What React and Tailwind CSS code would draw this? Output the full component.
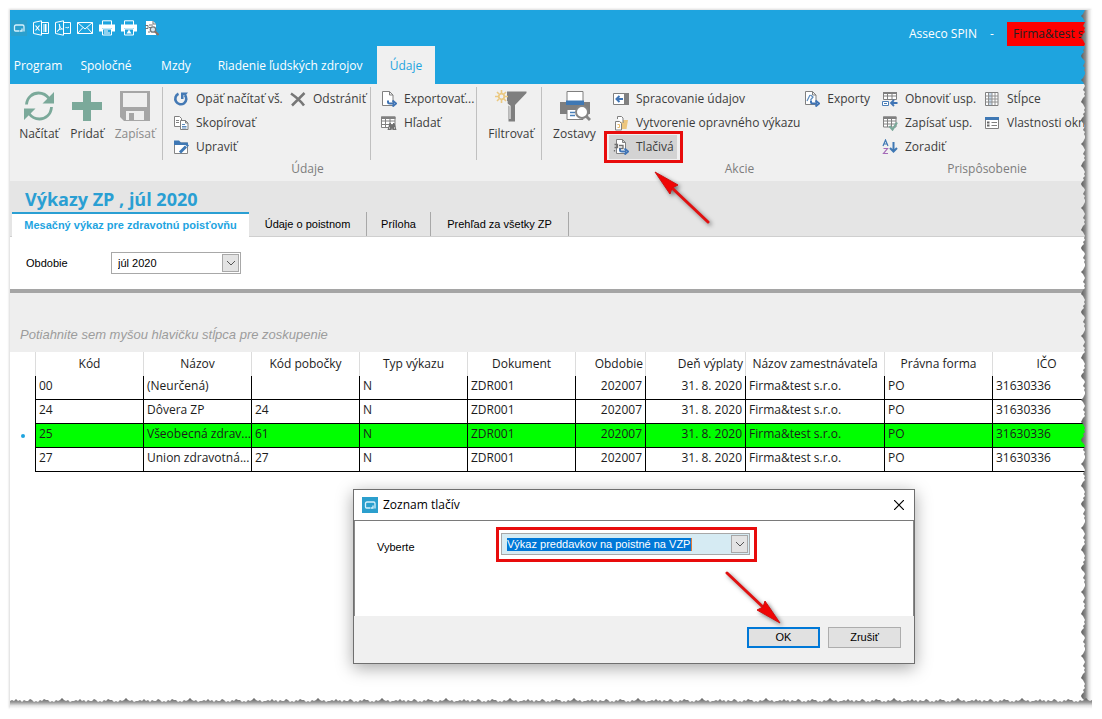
import React, { useState } from "react";
import clsx from "clsx";

const Svg = ({ className = "size-4", box = "0 0 16 16", children }) => (
  <svg viewBox={box} className={clsx("shrink-0", className)} fill="none" aria-hidden="true">
    {children}
  </svg>
);

/* ---------- Quick access icons ---------- */

const LogoIcon = ({ className }) => (
  <Svg className={className}>
    <rect width="16" height="16" fill="#2b9fcd" />
    <path d="M8.5 11h-4Q3.5 11 3.5 10V6.500Q3.500 5 5 5h6.500Q13 5 13 6.500V11.500M9 11H11V8.500" stroke="#d8f1fb" strokeWidth="1.3" />
  </Svg>
);

const ExcelIcon = () => (
  <Svg>
    <path d="M.5 2.500 8.500.8v14.400L.5 13.500zM8.500 2.500h7v11h-7M10 5h4M10 7h4M10 9h4M10 11h4M12.500 4v8" stroke="#fff" />
    <path d="m2.500 5.500 4 5m0-5-4 5" stroke="#fff" strokeWidth="1.200" />
  </Svg>
);

const PdfIcon = () => (
  <Svg>
    <path d="M.5 2.500 8.500.8v14.400L.5 13.500zM8.500 2.500h7v11h-7" stroke="#fff" />
    <path d="M2.200 11.500C5 9.500 5 7 4.300 4.200 5 8 6 8.700 7.500 9 5.500 8.800 4 9.200 2.200 11.500M10.500 8l1-1 1 1 1.500-1" stroke="#fff" />
  </Svg>
);

const MailIcon = () => (
  <Svg>
    <path d="M.5 2.500h15v11H.5zM.5 2.500 8 9l7.500-6.500M.5 13.500l5.500-6M15.500 13.500 10 7.500" stroke="#fff" />
  </Svg>
);

const PrinterIcon = ({ preview }) => (
  <Svg>
    <path d="M3.500 5V.8h9V5" stroke="#fff" />
    <path d="M0 4.500h16v7h-3V8.500H3v3H0z" fill="#fff" />
    <path d="M3.500 9h9v6h-9z" stroke="#fff" />
    {preview ? <path d="m8 9.500 2.500 4h-5z" fill="#fff" /> : <path d="M5 11h4M5 13h6" stroke="#fff" />}
  </Svg>
);

const ReportSearchIcon = () => (
  <Svg>
    <path d="M3 1h7l3 3v11H3z" fill="#fff" />
    <path d="M10 1v3h3M2 5.500h3v3H2M6 5h4M6 7.500h2M5 12h2" stroke="#6f777b" />
    <circle cx="10" cy="9.500" r="2.700" fill="#d6e7f1" stroke="#6f777b" strokeWidth="1.300" />
    <path d="m12 11.500 3.500 3.500" stroke="#8a6f63" strokeWidth="2" />
  </Svg>
);

/* ---------- Large ribbon icons ---------- */

const ReloadIcon = () => (
  <Svg className="size-8" box="0 0 32 32">
    <path d="M3.500 14.500C4 7 10 3 15.500 3c4.500 0 8 2 10.500 5.500M28.500 17C28 25 22 29 16.500 29 12 29 8.500 27 6 23.500" stroke="#7ba99a" strokeWidth="2.800" />
    <path d="M31 2v11.500H19.500zM1 30V18.500h11.500z" fill="#7ba99a" />
  </Svg>
);

const PlusIcon = () => (
  <Svg className="size-8" box="0 0 32 32">
    <path d="M12 1h8v11h11v8H20v11h-8V20H1v-8h11z" fill="#7ba99a" />
  </Svg>
);

const SaveIcon = () => (
  <Svg className="size-8" box="0 0 32 32">
    <path d="M1 1h30v30H5l-4-4z" fill="#a6a6a6" />
    <path d="M4 3h24v14H4zM7 21h18v9H7z" fill="#efefef" />
    <path d="M10 23h5v7h-5z" fill="#a6a6a6" />
  </Svg>
);

const FilterIcon = () => (
  <Svg className="size-8" box="0 0 32 32">
    <path d="M12 1.500h19.500v1.500L20 15v16.500h-6.500V15L12 13z" fill="#7f7f7f" />
    <path d="M12 11v3l3 2v13" stroke="#f0f0f0" strokeWidth="1.200" />
    <circle cx="6.500" cy="6.500" r="2.800" stroke="#ebc982" strokeWidth="1.800" />
    <path d="M6.500 0v3M6.500 10v3M0 6.500h3M10 6.500h3M2 2l2 2M9 9l2 2M2 11l2-2M9 4l2-2" stroke="#ebc982" strokeWidth="1.600" />
  </Svg>
);

const PrintPreviewIcon = () => (
  <Svg className="size-8" box="0 0 32 32">
    <path d="M1 12h30v12H1z" fill="#7f7f7f" />
    <path d="M8 1.500h16V15H8z" fill="#fff" stroke="#7f7f7f" />
    <path d="M7 10.500h18V15H7z" fill="#3f78b4" />
    <path d="M8 19.500h16v10H8z" fill="#fff" stroke="#7f7f7f" />
    <path d="M11 22.500h5M11 25.500h5" stroke="#4a7fb8" strokeWidth="1.300" />
    <circle cx="23" cy="22" r="6" fill="#fff" stroke="#858585" strokeWidth="2" />
    <path d="m27 26 4 4" stroke="#858585" strokeWidth="3" />
  </Svg>
);

/* ---------- Small ribbon icons ---------- */

const Arrow = () => <path d="M7 9.500v1.500q0 1.500 2 1.500h4M11.500 9.500l3.500 3-3.500 3" stroke="#3f74b5" strokeWidth="2" />;

const icons = {
  undo: (
    <Svg>
      <path d="M5.500 2.800A5.500 5.500 0 1 0 11.800 4" stroke="#4479b4" strokeWidth="2.600" />
      <path d="M8 1.500h7L13 4h-2.500v4H8z" fill="#4479b4" />
    </Svg>
  ),
  copy: (
    <Svg>
      <path d="M1.500 1.500h5l2 2v8h-7zM3 5.500h3M3 7.500h3" stroke="#808080" fill="#fff" />
      <path d="M7.500 5.500h5l2.500 2.500v6.500H7.500zM12.500 5.500V8H15" stroke="#808080" fill="#fff" />
      <path d="M9 9.500h3M9 11.500h4.500M9 13h4.500" stroke="#5b8abd" />
    </Svg>
  ),
  edit: (
    <Svg>
      <path d="M1.500 4v10.500h13V4z" fill="#fff" stroke="#858585" />
      <path d="M1 1.500h5l2 2h7V6H1z" fill="#3f78b4" />
      <path d="m7 13.500 6-6" stroke="#3f78b4" strokeWidth="3" />
      <path d="M13.500 7 15 5.500" stroke="#3f78b4" strokeWidth="3" />
    </Svg>
  ),
  remove: (
    <Svg>
      <path d="M1 2.500C6 6 10 9 14 14.500M14.500 2 2 14.500" stroke="#777" strokeWidth="2.500" />
    </Svg>
  ),
  exportFile: (
    <Svg>
      <path d="M1.500.5h7l3.500 3.500v10.500H1.500zM8.500.5V4H12" stroke="#808080" fill="#fff" />
      <Arrow />
    </Svg>
  ),
  find: (
    <Svg>
      <path d="M.5 2h13.500v10.500H.5zM.5 6h13.500M.5 9.500h13.500M4.500 3v9M9 3v9" stroke="#808080" fill="#fff" />
      <path d="M0 1.500h14.500v2.500H0z" fill="#808080" />
      <path d="m8.500 8-2 7h4l.5-2 .5 2h4l-2-7h-1.500v2h-2V8z" fill="#707070" />
      <path d="M8 13h1M13 13h1" stroke="#fff" />
    </Svg>
  ),
  process: (
    <Svg>
      <path d="M.5 2.500h15v11H.5z" fill="#fff" stroke="#808080" />
      <path d="M11 2h5v12h-5z" fill="#808080" />
      <path d="M10 8H4M6.500 5 3.500 8l3 3" stroke="#3f74b5" strokeWidth="2" />
    </Svg>
  ),
  correction: (
    <Svg>
      <path d="M8 5h7l-1.500 9H6z" fill="#edc67d" />
      <path d="M2.500 6.500h4l2 2v6.500h-6zM4.500 4V1.500h4l1.500 1.500v5" stroke="#808080" fill="#fff" />
      <path d="M4.500 9.500h2v3h-2" stroke="#e8bd70" />
    </Svg>
  ),
  forms: (
    <Svg>
      <path d="M3.500.5h6l3 3v11h-9zM9.500.5v3h3" stroke="#808080" fill="#fff" />
      <path d="M1.500 5.500h3v3h-3M6 6.500h4v3H6M1.500 11v1.500" stroke="#707070" strokeWidth="1.300" />
      <Arrow />
    </Svg>
  ),
  exports: (
    <Svg>
      <path d="M1.500.5h7l3.500 3.500v9.500H1.500zM8.500.5V4H12" stroke="#808080" fill="#fff" />
      <path d="M3 10 6 4M6.500 4l2.500 2-2.500 3" stroke="#5b8abd" strokeWidth="1.200" />
      <Arrow />
    </Svg>
  ),
  restoreView: (
    <Svg>
      <path d="M1.500 1.500h13v7h-13zM1.500 5h13M5.500 2v6.500M10 2v6.500" stroke="#808080" fill="#fff" />
      <path d="M1 1h14v2H1z" fill="#808080" />
      <path d="M.5 10.500h6v4h-6zM2 12.500h3" stroke="#4b7eb7" fill="#fff" />
      <path d="M15.500 12H10M12 9l-3 3 3 3" stroke="#3f74b5" strokeWidth="1.800" />
    </Svg>
  ),
  saveView: (
    <Svg>
      <path d="M1.500 2h12.500v10H1.500zM1.500 6h12.500M1.500 9h12.500M5.500 3v9M9.500 3v9" stroke="#808080" fill="#fff" />
      <path d="M1 1.500h13.500V4H1z" fill="#808080" />
      <path d="m7.500 11 3 3.500L15 7.500" stroke="#7ba99a" strokeWidth="2.200" />
    </Svg>
  ),
  sort: (
    <Svg>
      <path d="M1 7 3.500 1 6 7M2 5h3" stroke="#3f78b4" strokeWidth="1.200" />
      <path d="M1.500 9.500h4l-4 5h4.500" stroke="#a56bb8" strokeWidth="1.200" />
      <path d="M11.500 3v9M8 9l3.500 3.500L15 9" stroke="#3f78b4" strokeWidth="2" />
    </Svg>
  ),
  columns: (
    <Svg>
      <path d="M1.500 1.500h12.500v13H1.500z" fill="#fff" stroke="#808080" />
      <path d="M5 2h3v12H5z" fill="#c5d7e9" />
      <path d="M1.500 5h12.500M1.500 8h12.500M1.500 11h12.500M4.500 2v12M8 2v12M11 2v12" stroke="#909090" />
    </Svg>
  ),
  properties: (
    <Svg>
      <path d="M1.500 2.500h13v11h-13z" fill="#fff" stroke="#808080" />
      <path d="M1 2h14v3H1z" fill="#3f78b4" />
      <path d="M3 7.500h2.500M3 10.500h2.500" stroke="#666" strokeWidth="2" />
      <path d="M7.500 7.500H13M7.500 10.500H13" stroke="#808080" />
    </Svg>
  ),
};

/* ---------- Ribbon parts ---------- */

const BigButton = ({ icon, label, disabled }) => (
  <button
    type="button"
    disabled={disabled}
    className={clsx("flex w-12 flex-col items-center gap-0.5 pt-[3px]", disabled ? "text-[#8a8a8a]" : "text-[#3c3c3c]")}
  >
    {icon}
    <span className="leading-5 whitespace-nowrap">{label}</span>
  </button>
);

const SmallButton = ({ icon, label }) => (
  <button type="button" className="flex h-6 items-center gap-[7px] whitespace-nowrap">
    {icons[icon]}
    {label}
  </button>
);

const Separator = () => <div className="h-[73px] w-px bg-[#c0c0c0]" />;

const GroupLabel = ({ children }) => (
  <div className="text-center leading-[18px] text-[#7d7d7d]">{children}</div>
);

const RedArrow = ({ className, down }) => (
  <svg viewBox="0 0 64 64" className={clsx("pointer-events-none absolute size-16 drop-shadow-[2px_2px_2px_rgba(0,0,0,0.5)]", className)} aria-hidden="true">
    <g transform={down ? "rotate(180 32 32)" : undefined}>
      <path d="m20 20 37 35" stroke="#e01010" strokeWidth="3" strokeLinecap="round" />
      <path d="m4 5 23 13-6 3-2 6z" fill="#f00505" stroke="#d01010" />
    </g>
  </svg>
);

const menu = [
  { label: "Program", width: "w-14" },
  { label: "Spoločné", width: "w-20" },
  { label: "Mzdy", width: "w-[60px]" },
  { label: "Riadenie ľudských zdrojov", width: "w-[168px]" },
  { label: "Údaje", width: "w-[58px] ml-[3px]" },
];

const Header = () => (
  <header className="bg-[#1ea4df] text-white">
    <div className="flex h-9 items-start justify-between">
      <div className="flex gap-1.5 pt-2.5 pl-px">
        <LogoIcon className="size-4" />
        <ExcelIcon />
        <PdfIcon />
        <MailIcon />
        <PrinterIcon />
        <PrinterIcon preview />
        <ReportSearchIcon />
      </div>
      <div className="flex h-9 items-end">
        <span className="leading-6">Asseco SPIN</span>
        <span className="w-[30px] text-center leading-6">-</span>
        <span className="w-[85px] overflow-hidden bg-[#fe0000] pl-1.5 leading-6 whitespace-nowrap text-[#222]">Firma&amp;test s.r.o.</span>
      </div>
    </div>
    <nav className="flex h-[38px]">
      {menu.map((item) => (
        <button
          key={item.label}
          type="button"
          className={clsx(
            "pt-0.5 text-center whitespace-nowrap",
            item.width,
            item.label === "Údaje" && "bg-[#f0f0f0] text-[#1ea4df]"
          )}
        >
          {item.label}
        </button>
      ))}
    </nav>
  </header>
);

const Ribbon = () => (
  <div className="flex h-[97px] bg-[#f0f0f0] pt-[3px] text-[#3c3c3c]">
    <section className="w-[595px] shrink-0">
      <div className="flex">
        <div className="flex pr-[3px] pl-[5px]">
          <BigButton icon={<ReloadIcon />} label="Načítať" />
          <BigButton icon={<PlusIcon />} label="Pridať" />
          <BigButton icon={<SaveIcon />} label="Zapísať" disabled />
        </div>
        <Separator />
        <div className="grid w-[207px] grid-cols-[117px_1fr] content-start pl-2.5">
          <SmallButton icon="undo" label="Opäť načítať vš." />
          <SmallButton icon="remove" label="Odstrániť" />
          <SmallButton icon="copy" label="Skopírovať" />
          <span />
          <SmallButton icon="edit" label="Upraviť" />
        </div>
        <Separator />
        <div className="w-[105px] pl-2.5">
          <SmallButton icon="exportFile" label="Exportovať..." />
          <SmallButton icon="find" label="Hľadať" />
        </div>
        <Separator />
        <div className="flex w-16 justify-center pl-1">
          <BigButton icon={<FilterIcon />} label="Filtrovať" />
        </div>
        <Separator />
        <div className="flex flex-1 justify-center pl-0.5">
          <BigButton icon={<PrintPreviewIcon />} label="Zostavy" />
        </div>
      </div>
      <GroupLabel>Údaje</GroupLabel>
    </section>
    <div className="mt-[5px] h-20 w-px bg-[#c0c0c0]" />
    <section className="w-[269px] shrink-0">
      <div className="flex h-[73px] justify-between pr-1 pl-2">
        <div>
          <SmallButton icon="process" label="Spracovanie údajov" />
          <SmallButton icon="correction" label="Vytvorenie opravného výkazu" />
          <div className="relative -ml-1 w-[68px] bg-[#d3d3d3] pl-1">
            <SmallButton icon="forms" label="Tlačivá" />
            <div className="pointer-events-none absolute -inset-y-1 -right-1.5 -left-[5px] border-3 border-[#e80c0c]" />
            <RedArrow className="top-8 left-[42px]" />
          </div>
        </div>
        <div>
          <SmallButton icon="exports" label="Exporty" />
        </div>
      </div>
      <GroupLabel>Akcie</GroupLabel>
    </section>
    <div className="mt-[5px] h-20 w-px bg-[#c0c0c0]" />
    <section className="w-[226px] shrink-0">
      <div className="flex h-[73px] gap-4 pl-2">
        <div className="w-[86px]">
          <SmallButton icon="restoreView" label="Obnoviť usp." />
          <SmallButton icon="saveView" label="Zapísať usp." />
          <SmallButton icon="sort" label="Zoradiť" />
        </div>
        <div>
          <SmallButton icon="columns" label="Stĺpce" />
          <SmallButton icon="properties" label="Vlastnosti okna" />
        </div>
      </div>
      <GroupLabel>Prispôsobenie</GroupLabel>
    </section>
  </div>
);

/* ---------- Document area ---------- */

const Chevron = () => (
  <span className="pointer-events-none flex h-[18px] w-[17px] items-center justify-center border border-[#a8a8a8] bg-[#e3e3e3]">
    <Svg className="h-1.5 w-2.5" box="0 0 10 6">
      <path d="m1 1 4 4 4-4" stroke="#555" />
    </Svg>
  </span>
);

const docTabs = [
  { label: "Údaje o poistnom", width: "w-[118px]" },
  { label: "Príloha", width: "w-16" },
  { label: "Prehľad za všetky ZP", width: "w-[138px]" },
];

const columns = [
  { key: "code", label: "Kód", width: "w-[108px]" },
  { key: "name", label: "Názov", width: "w-[108px]" },
  { key: "branch", label: "Kód pobočky", width: "w-[108px]" },
  { key: "type", label: "Typ výkazu", width: "w-[108px]" },
  { key: "doc", label: "Dokument", width: "w-[108px]" },
  { key: "period", label: "Obdobie", width: "w-[70px]", right: true },
  { key: "payday", label: "Deň výplaty", width: "w-[100px]", right: true },
  { key: "employer", label: "Názov zamestnávateľa", width: "w-[139px]" },
  { key: "form", label: "Právna forma", width: "w-[108px]" },
  { key: "ico", label: "IČO", width: "w-auto" },
];

const common = {
  type: "N",
  doc: "ZDR001",
  period: "202007",
  payday: "31. 8. 2020",
  employer: "Firma&test s.r.o.",
  form: "PO",
  ico: "31630336",
};

const rows = [
  { code: "00", name: "(Neurčená)", branch: "", ...common },
  { code: "24", name: "Dôvera ZP", branch: "24", ...common },
  { code: "25", name: "Všeobecná  zdrav...", branch: "61", ...common, selected: true },
  { code: "27", name: "Union  zdravotná...", branch: "27", ...common },
];

const ReportTable = () => (
  <table className="w-full table-fixed border-separate border-spacing-0 text-[#1c1c1c]">
    <thead>
      <tr className="h-6">
        <th className="w-[25px] border-r border-[#dcdcdc]" aria-label="Stav" />
        {columns.map((col) => (
          <th
            key={col.key}
            className={clsx(
              "p-0 font-normal whitespace-nowrap",
              col.width,
              col.right ? "pr-0.5 text-right" : "text-center",
              col.key === "ico" ? "pl-2" : "border-r border-[#dcdcdc]"
            )}
          >
            {col.label}
          </th>
        ))}
      </tr>
    </thead>
    <tbody>
      {rows.map((row) => (
        <tr key={row.code} className="h-6">
          <td className="border-r border-black p-0 pl-2.5">
            {row.selected && <div className="size-1 rounded-full bg-[#1ea4df]" />}
          </td>
          {columns.map((col) => (
            <td
              key={col.key}
              className={clsx(
                "overflow-hidden border-b border-black p-0 pb-[3px] leading-5 whitespace-nowrap",
                col.right ? "pr-[3px] text-right" : "pl-[3px]",
                col.key !== "ico" && "border-r",
                row.selected && "bg-[#00ff00]"
              )}
            >
              {row[col.key]}
            </td>
          ))}
        </tr>
      ))}
    </tbody>
  </table>
);

const FormsDialog = () => (
  <div
    role="dialog"
    aria-labelledby="dialog-title"
    className="absolute top-[479px] left-[343px] w-[562px] border border-[#6f6f6f] bg-[#f0f0f0] shadow-[0_4px_16px_rgba(0,0,0,0.35)]"
  >
    <div className="flex h-[31px] items-center border-b border-[#7a7a7a] bg-white pr-2.5 pl-2 text-black">
      <LogoIcon className="size-4" />
      <h2 id="dialog-title" className="flex-1 pl-[5px]">Zoznam tlačív</h2>
      <button type="button" aria-label="Zavrieť">
        <Svg className="size-2.5" box="0 0 10 10">
          <path d="m0 0 10 10M10 0 0 10" stroke="#000" strokeWidth="1.200" />
        </Svg>
      </button>
    </div>
    <div className="flex h-[95px] items-start border-x border-[#8a8a8a] bg-white pt-1.5 pl-[22px] font-['Liberation_Sans',sans-serif] text-[11px] text-black">
      <label htmlFor="form-type" className="w-[119px] pt-3">Vyberte</label>
      <div className="border-3 border-[#e80c0c] pt-[3px] pr-1 pb-1 pl-0.5">
        <div className="flex h-[22px] w-[249px] items-center justify-between border border-[#a8a8a8] bg-[#d6ebf3] pr-px pl-[5px]">
          <select id="form-type" className="appearance-none border-r border-[#e07b39] bg-[#0078d7] p-0 leading-[13px] text-white">
            <option>Výkaz preddavkov na poistné na VZP</option>
          </select>
          <Chevron />
        </div>
      </div>
    </div>
    <div className="relative flex h-[47px] items-start justify-end gap-2 pt-[11px] pr-[13px] font-['Liberation_Sans',sans-serif] text-[11px] text-black">
      <button type="button" className="h-[21px] w-[73px] border-2 border-[#0078d7] bg-[#e1e1e1]">OK</button>
      <button type="button" className="h-[21px] w-[73px] border border-[#adadad] bg-[#e1e1e1]">Zrušiť</button>
      <RedArrow className="right-[130px] bottom-[35px]" down />
    </div>
  </div>
);

/* ---------- Torn paper edge ---------- */

const rightTeeth = [5, 4, 3, 1, 3, 4, 5, 4, 3, 5, 4, 5, 3, 2, 1, 3, 4, 5, 4, 5, 3, 4, 2, 1, 2, 4, 5, 4, 3, 5, 4, 5];
const bottomTeeth = [4, 3, 4, 2, 4, 3, 5, 3, 4, 4, 2, 3, 5, 4, 5, 3, 4, 2, 3, 3, 5, 4, 5, 3, 4, 3, 1, 3, 4, 3, 5, 4];

const rightEdge = rightTeeth.map((t, i) => `L${t} ${i * 2}`).join(" ");
const bottomEdge = bottomTeeth.map((t, i) => `L${i * 2} ${t}`).join(" ");

const TornEdges = () => (
  <>
    <svg className="pointer-events-none absolute top-0 right-0 h-full w-3" aria-hidden="true">
      <defs>
        <linearGradient id="fade-right">
          <stop offset="0" stopColor="#5c5c5c" />
          <stop offset="0.400" stopColor="#8c8c8c" />
          <stop offset="0.700" stopColor="#dedede" />
          <stop offset="1" stopColor="#fff" />
        </linearGradient>
        <pattern id="torn-right" width="12" height="64" patternUnits="userSpaceOnUse">
          <path d={`M12 0 ${rightEdge} L5 64 L12 64Z`} fill="url(#fade-right)" />
        </pattern>
      </defs>
      <rect width="100%" height="100%" fill="url(#torn-right)" />
    </svg>
    <svg className="pointer-events-none absolute bottom-0 left-0 h-3 w-full" aria-hidden="true">
      <defs>
        <linearGradient id="fade-bottom" x2="0" y2="1">
          <stop offset="0" stopColor="#5c5c5c" />
          <stop offset="0.400" stopColor="#9c9c9c" />
          <stop offset="0.700" stopColor="#e6e6e6" />
          <stop offset="1" stopColor="#fff" />
        </linearGradient>
        <pattern id="torn-bottom" width="64" height="12" patternUnits="userSpaceOnUse">
          <path d={`M0 12 ${bottomEdge} L64 4 L64 12Z`} fill="url(#fade-bottom)" />
        </pattern>
      </defs>
      <rect width="100%" height="100%" fill="url(#torn-bottom)" />
    </svg>
  </>
);

const App = () => {
  const [period, setPeriod] = useState("júl 2020");

  return (
    <div className="flex h-screen min-h-[719px] bg-white p-2.5 font-['Open_Sans','Noto_Sans',sans-serif] text-[12px]">
      <main className="relative flex-1 overflow-hidden bg-white shadow-[-1px_-1px_2px_rgba(0,0,0,0.15)]">
        <Header />
        <Ribbon />

        <div className="bg-[#e5e5e5]">
          <h1 className="pt-1.5 pl-[15px] text-[18px] leading-6 font-bold text-[#2a9fd3]">Výkazy ZP , júl 2020</h1>
          <div className="flex h-[26px] items-end border-b border-[#cfcfcf] pl-0.5 font-['Liberation_Sans',sans-serif] text-[11px] text-black">
            <button type="button" className="-mb-px h-[25px] w-[237px] border-t-2 border-[#2a9fd3] bg-white font-bold whitespace-nowrap text-[#1ea4df]">
              Mesačný výkaz pre zdravotnú poisťovňu
            </button>
            {docTabs.map((tab) => (
              <button key={tab.label} type="button" className={clsx("h-6 border-r border-[#a8a8a8] whitespace-nowrap", tab.width)}>
                {tab.label}
              </button>
            ))}
          </div>
        </div>

        <div className="flex h-14 items-center border-b-4 border-[#a5a5a5] pl-4 font-['Liberation_Sans',sans-serif] text-[11px] text-black">
          <label htmlFor="period" className="w-[85px]">Obdobie</label>
          <div className="relative flex h-[22px] w-[130px] items-center border border-[#a8a8a8]">
            <select
              id="period"
              value={period}
              onChange={(e) => setPeriod(e.target.value)}
              className="h-full w-full appearance-none bg-transparent pl-1.5"
            >
              <option>júl 2020</option>
            </select>
            <div className="pointer-events-none absolute right-px">
              <Chevron />
            </div>
          </div>
        </div>

        <div className="bg-[#eeeeee] pt-[25px] pl-2.5 font-['Liberation_Sans',sans-serif] text-[13px] leading-[34px] text-[#9c9c9c] italic">
          Potiahnite sem myšou hlavičku stĺpca pre zoskupenie
        </div>

        <div className="pl-px">
          <ReportTable />
        </div>

        <FormsDialog />
        <TornEdges />
      </main>
    </div>
  );
};

export default App;
